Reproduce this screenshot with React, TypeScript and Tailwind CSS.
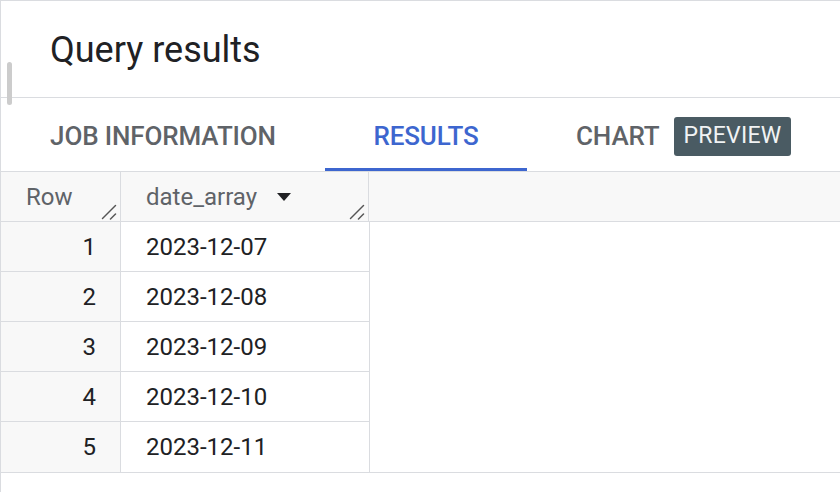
import React from "react";

const rows = ["2023-12-07", "2023-12-08", "2023-12-09", "2023-12-10", "2023-12-11"];

function ResizeHandle() {
  return (
    <svg width="16" height="16" viewBox="0 0 16 16" className="absolute right-[3px] bottom-[1px]">
      <path d="M1.5 14.5 L14.5 1.5" stroke="#555" strokeWidth="1.5" strokeLinecap="round" />
      <path d="M9.5 15 L14.5 10" stroke="#555" strokeWidth="1.5" strokeLinecap="round" />
    </svg>
  );
}

export default function App() {
  return (
    <div
      className="relative w-[840px] h-[492px] overflow-hidden bg-white border-t border-l border-[#dadce0]"
      style={{ fontFamily: "Roboto, 'Liberation Sans', sans-serif" }}
    >
      {/* title */}
      <div className="h-[97px] border-b border-[#dadce0] flex items-center pl-[49px] pt-[2px]">
        <h1 className="text-[36px] text-[#202124] leading-none">Query results</h1>
      </div>
      {/* scroll handle */}
      <div className="absolute left-[6px] top-[61px] w-[5px] h-[43px] rounded-full bg-[#cccccc]" />

      {/* tabs */}
      <div className="h-[74px] border-b border-[#dadce0] flex items-stretch pt-[3px]">
        <div className="w-[324px] flex items-center justify-center text-[26px] font-medium tracking-[-0.005em] text-[#5f6368]">
          JOB INFORMATION
        </div>
        <div className="relative w-[202px] flex items-center justify-center text-[26px] font-medium tracking-[-0.005em] text-[#3d66cf]">
          RESULTS
          <div className="absolute left-0 right-0 bottom-0 h-[3px] bg-[#3d66cf]" />
        </div>
        <div className="flex items-center pl-[49px] gap-[14px]">
          <span className="text-[26px] font-medium tracking-[-0.005em] text-[#5f6368]">CHART</span>
          <span className="h-[39px] px-[10px] flex items-center rounded-[3px] bg-[#4a5b63] text-[#f1f3f4] text-[23px] tracking-[0.01em]">
            PREVIEW
          </span>
        </div>
      </div>

      {/* table header */}
      <div className="h-[50px] flex bg-[#f8f8f8] border-b border-[#dadce0] text-[24px] text-[#5f6368]">
        <div className="relative w-[120px] border-r border-[#dadce0] flex items-center pl-[25px]">
          Row
          <ResizeHandle />
        </div>
        <div className="relative w-[248px] border-r border-[#dadce0] flex items-center pl-[25px] gap-[20px]">
          <span>date_array</span>
          <svg width="14" height="8" viewBox="0 0 14 8">
            <path d="M0 0 H14 L7 8 Z" fill="#202124" />
          </svg>
          <ResizeHandle />
        </div>
        <div className="flex-1" />
      </div>

      {/* table body */}
      <div className="border-b border-[#dadce0]">
        {rows.map((d, i) => (
          <div
            key={d}
            className={
              "w-[369px] h-[50px] flex border-r border-[#dadce0] text-[24px] text-[#202124] " +
              (i < rows.length - 1 ? "border-b" : "")
            }
          >
            <div className="w-[120px] bg-[#f8f8f8] border-r border-[#dadce0] flex items-center justify-end pr-[24px]">
              {i + 1}
            </div>
            <div className="flex-1 flex items-center pl-[25px]">{d}</div>
          </div>
        ))}
      </div>
    </div>
  );
}
